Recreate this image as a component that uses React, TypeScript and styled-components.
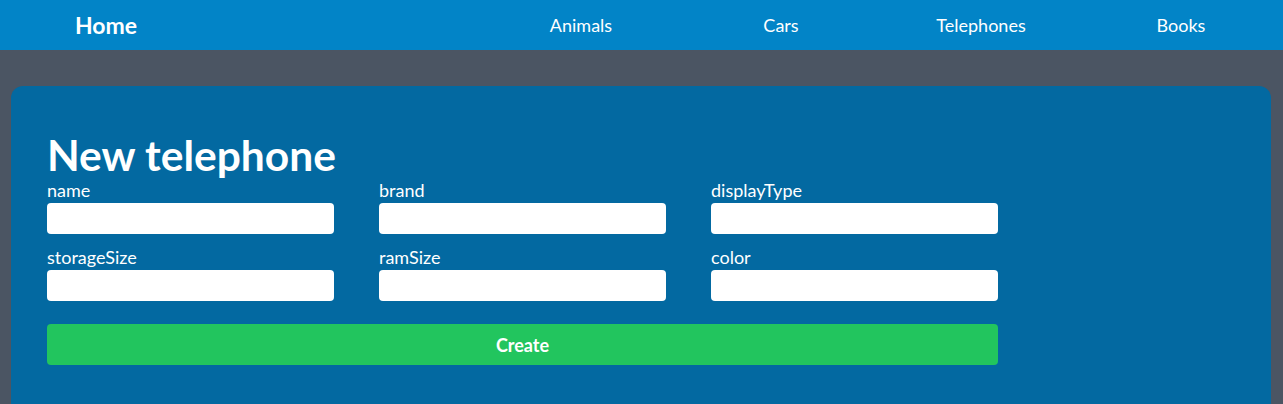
import React from "react";
import styled, { createGlobalStyle } from "styled-components";

const GlobalStyle = createGlobalStyle`
  html, body {
    margin: 0;
    padding: 0;
    background: #4b5563;
    font-family: Lato, "Noto Sans", sans-serif;
    color: #ffffff;
  }
  * {
    box-sizing: border-box;
  }
`;

const fields = [
  "name",
  "brand",
  "displayType",
  "storageSize",
  "ramSize",
  "color",
];

const links = ["Animals", "Cars", "Telephones", "Books"];

export default function App() {
  return (
    <>
      <GlobalStyle />
      <NavBar>
        <HomeLink>Home</HomeLink>
        <NavLinks>
          {links.map((link) => (
            <NavLink key={link}>{link}</NavLink>
          ))}
        </NavLinks>
      </NavBar>
      <Page>
        <Card>
          <Title>New telephone</Title>
          <FormGrid>
            {fields.map((field) => (
              <Field key={field}>
                <Label>{field}</Label>
                <Input type="text" />
              </Field>
            ))}
            <CreateButton>Create</CreateButton>
          </FormGrid>
        </Card>
      </Page>
    </>
  );
}

const NavBar = styled.nav`
  display: flex;
  align-items: center;
  justify-content: space-between;
  height: 50px;
  background: #0284c7;
  padding-left: 75px;
  padding-right: 2px;
`;

const HomeLink = styled.a`
  font-size: 23px;
  font-weight: 700;
  color: #ffffff;
`;

const NavLinks = styled.div`
  display: flex;
`;

const NavLink = styled.a`
  width: 200px;
  text-align: center;
  font-size: 18px;
  color: #ffffff;
`;

const Page = styled.main`
  padding: 36px 12px 0 11px;
`;

const Card = styled.section`
  background: #0369a1;
  border-radius: 12px;
  padding: 44px 36px 40px;
  min-height: 330px;
`;

const Title = styled.h1`
  margin: 0;
  font-size: 42.5px;
  line-height: 50px;
  font-weight: 700;
`;

const FormGrid = styled.div`
  display: grid;
  grid-template-columns: repeat(3, 287px);
  column-gap: 45px;
  row-gap: 13px;
`;

const Field = styled.label`
  display: flex;
  flex-direction: column;
  gap: 2px;
`;

const Label = styled.span`
  font-size: 18px;
  line-height: 21px;
`;

const Input = styled.input`
  height: 31px;
  border: none;
  border-radius: 4px;
  background: #ffffff;
  padding: 0 8px;
  font-size: 16px;
`;

const CreateButton = styled.button`
  grid-column: 1 / -1;
  margin-top: 10px;
  height: 41px;
  border: none;
  border-radius: 4px;
  background: #22c55e;
  color: #ffffff;
  font-family: inherit;
  font-size: 18px;
  font-weight: 700;
`;
